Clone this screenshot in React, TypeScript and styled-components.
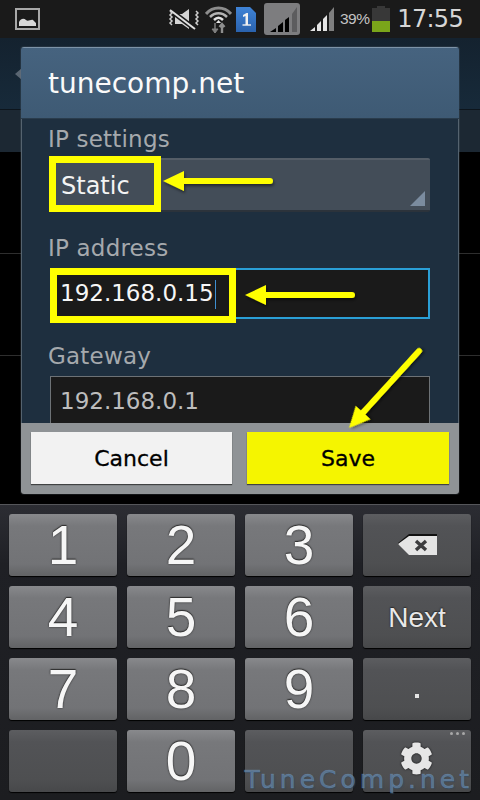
import React, { FC } from 'react'
import styled, { createGlobalStyle } from 'styled-components'
import { FaCog } from 'react-icons/fa'

const GlobalStyle = createGlobalStyle`
  html, body {
    margin: 0;
    padding: 0;
    background: #000;
  }
`

const HAND = `"DejaVu Sans", "Liberation Sans", sans-serif`

const Screen = styled.div`
  position: relative;
  width: 480px;
  height: 800px;
  overflow: hidden;
  display: flex;
  flex-direction: column;
  background: #000;
  font-family: "Liberation Sans", sans-serif;
`

/* status bar */

const StatusBar = styled.div`
  height: 38px;
  flex: none;
  display: flex;
  align-items: center;
  padding: 0 17px 0 15px;
  background: #1a1a1a;
`

const StatusRight = styled.div`
  margin-left: auto;
  display: flex;
  align-items: center;
`

const StatusGap = styled.span<{ $width: number }>`
  width: ${p => p.$width}px;
`

const Percent = styled.span`
  font-size: 15.5px;
  color: #c4c4c4;
  letter-spacing: -0.6px;
  margin: 0 3px 0 6px;
`

const Clock = styled.span`
  font-family: ${HAND};
  font-size: 24px;
  color: #d6d6d6;
  margin-left: 7px;
  letter-spacing: -0.7px;
`

/* page behind the dialog */

const PageHeader = styled.div`
  height: 72px;
  flex: none;
  display: flex;
  align-items: center;
  padding-left: 15px;
  background: linear-gradient(#14222f, #172a3a);
  border-bottom: 1px solid #0d151c;
  box-sizing: border-box;
`

const BackCaret = styled.div`
  width: 0;
  height: 0;
  border-style: solid;
  border-width: 6px 7px 6px 0;
  border-color: transparent #5a6672 transparent transparent;
`

const PageTabs = styled.div`
  height: 42px;
  flex: none;
  background: #1c2833;
`

const PageRow = styled.div<{ $height: number }>`
  height: ${p => p.$height}px;
  flex: none;
  box-sizing: border-box;
  border-bottom: 1px solid #2e2e2e;
`

/* dialog */

const Dialog = styled.div`
  position: absolute;
  left: 21px;
  top: 47px;
  width: 438px;
  height: 447px;
  border-radius: 3px;
  overflow: hidden;
  display: flex;
  flex-direction: column;
  box-shadow: 0 0 0 1px rgba(120, 135, 150, 0.15);
`

const DialogTitle = styled.div`
  height: 72px;
  flex: none;
  box-sizing: border-box;
  padding: 19px 0 0 27px;
  background: linear-gradient(#46637f, #3e5a74);
  border-top: 1px solid #7d93a8;
  border-bottom: 1px solid #2a3c4c;
  font-family: ${HAND};
  font-size: 28px;
  color: #fafafa;
`

const DialogBody = styled.div`
  flex: 1;
  min-height: 0;
  overflow: hidden;
  padding: 7px 28px 0;
  background: #1e2f3f;
  border-left: 1px solid #55636f;
  border-right: 1px solid #55636f;
`

const FieldLabel = styled.div`
  font-family: ${HAND};
  font-size: 23px;
  line-height: 26px;
  letter-spacing: 0.2px;
  color: #a5a9ad;
  margin-left: -2px;
`

const Select = styled.div`
  position: relative;
  height: 54px;
  margin: 6px 0 23px;
  box-sizing: border-box;
  padding: 12px 11px;
  border-radius: 2px;
  background: #434d58;
  border-top: 2px solid #545d67;
  border-bottom: 2px solid #2c333b;
  font-family: ${HAND};
  font-size: 24px;
  color: #f4f4f4;
`

const SelectCorner = styled.div`
  position: absolute;
  right: 5px;
  bottom: 4px;
  width: 0;
  height: 0;
  border-style: solid;
  border-width: 0 0 15px 15px;
  border-color: transparent transparent #7b8c9f transparent;
`

const Input = styled.div<{ $focused?: boolean }>`
  position: relative;
  height: 51px;
  margin: 7px 0 24px;
  box-sizing: border-box;
  padding: ${p => (p.$focused ? '10px 8px' : '11px 9px')};
  background: #1a1a1a;
  border: ${p => (p.$focused ? '2px solid #2a9fd6' : '1px solid #6d7276')};
  font-family: ${HAND};
  font-size: 23px;
  color: ${p => (p.$focused ? '#f6f6f6' : '#bdbdbd')};
`

const Caret = styled.span`
  display: inline-block;
  width: 1px;
  height: 29px;
  margin-left: 1px;
  vertical-align: middle;
  background: #3f8fd0;
`

const Highlight = styled.div<{ $left: number; $top: number; $width: number; $height: number }>`
  position: absolute;
  left: ${p => p.$left}px;
  top: ${p => p.$top}px;
  width: ${p => p.$width}px;
  height: ${p => p.$height}px;
  box-sizing: border-box;
  border: 7px solid #ffff00;
`

const ButtonPanel = styled.div`
  height: 71px;
  flex: none;
  box-sizing: border-box;
  padding: 9px 10px 10px;
  display: flex;
  gap: 15px;
  background: #8f9396;
`

const DialogButton = styled.div<{ $primary?: boolean }>`
  flex: none;
  width: ${p => (p.$primary ? 202 : 201)}px;
  display: flex;
  align-items: center;
  justify-content: center;
  background: ${p => (p.$primary ? '#f5f500' : '#f2f2f2')};
  box-shadow: 0 1px 1px rgba(0, 0, 0, 0.55);
  font-family: ${HAND};
  font-size: 22px;
  color: #000;
  -webkit-text-stroke: 0.3px #000;
`

/* keyboard */

const Keyboard = styled.div`
  position: absolute;
  left: 0;
  top: 504px;
  width: 480px;
  height: 296px;
  box-sizing: border-box;
  padding: 9px 9px 0;
  display: grid;
  grid-template-columns: repeat(4, 108px);
  grid-auto-rows: 62px;
  gap: 10px;
  background: linear-gradient(#2c2d33 0, #1f2025 60px, #1c1d20 100%);
  border-top: 1px solid #55565a;
`

const Key = styled.div<{ $dark?: boolean }>`
  position: relative;
  display: flex;
  align-items: center;
  justify-content: center;
  border-radius: 3px;
  background: ${p =>
    p.$dark
      ? 'linear-gradient(#5c5d60 0, #525356 12px, #4e4f51 50px, #47484a 100%)'
      : 'linear-gradient(#88898c 0, #77787b 12px, #727376 50px, #626365 100%)'};
  box-shadow: 0 1px 1px #000;
  color: #f6f6f6;
  font-size: 55px;
  line-height: 1;
  text-shadow: 0 0 2px #222, 0 -1px 1px #333;
`

const NextLabel = styled.span`
  font-size: 28px;
  margin-top: 2px;
  color: #e8e8e8;
`

const DotLabel = styled.span`
  width: 4px;
  height: 4px;
  margin-top: 14px;
  background: #e4e4e4;
`

const MoreDots = styled.span`
  position: absolute;
  right: 6px;
  top: 2px;
  font-size: 0;
  display: flex;
  gap: 3px;

  i {
    width: 3px;
    height: 3px;
    border-radius: 50%;
    background: #a8a8a8;
  }
`

const Gear = styled(FaCog)`
  color: #e6e6e6;
  font-size: 33px;
  margin: 0 2px 6px 0;
  filter: drop-shadow(0 0 1px #111);
`

const Watermark = styled.div`
  position: absolute;
  right: 7px;
  bottom: 7px;
  font-family: "DejaVu Sans", sans-serif;
  font-size: 25px;
  letter-spacing: 4px;
  line-height: 26px;
  color: rgba(112, 152, 192, 0.55);
  -webkit-text-stroke: 0.5px rgba(112, 152, 192, 0.55);
  text-shadow: 1px 1px 1px rgba(40, 70, 100, 0.5);
`

const Annotations = styled.svg`
  position: absolute;
  left: 0;
  top: 0;
  pointer-events: none;
`

/* small drawings */

const PictureIcon: FC = () => (
  <svg width="25" height="22" viewBox="0 0 25 22">
    <rect x="1" y="1" width="23" height="20" fill="none" stroke="#a8a8a8" strokeWidth="2" />
    <path d="M4 18 V14 C6 10 9 10 11 12 C13 14 16 11 18 12 L21 15 V18 Z" fill="#d8d8d8" />
  </svg>
)

const MuteIcon: FC = () => (
  <svg width="31" height="22" viewBox="0 0 31 22">
    <path d="M7 6 L14 6 L21 1 V21 L14 16 L7 16 Z" fill="#d4d4d4" />
    <path d="M2 2 L27 21" stroke="#1a1a1a" strokeWidth="5" />
    <path d="M2 2 L27 21" stroke="#e0e0e0" strokeWidth="2" />
    <path d="M2 3 l2 2 -2 2 2 2 -2 2 2 2 -2 2 2 2 M28 3 l2 2 -2 2 2 2 -2 2 2 2 -2 2 2 2" fill="none" stroke="#cfcfcf" strokeWidth="1.5" />
  </svg>
)

const WifiIcon: FC = () => (
  <svg width="27" height="27" viewBox="0 0 27 27">
    <path d="M1 8 C8 0 19 0 26 8" fill="none" stroke="#8d8d8d" strokeWidth="3" />
    <path d="M5 11 C10 6 17 6 22 11" fill="none" stroke="#b4b4b4" strokeWidth="2.5" />
    <path d="M9 14 C12 11 15 11 18 14" fill="none" stroke="#e2e2e2" strokeWidth="2.5" />
    <path d="M13.5 14 L11 17 H16 Z" fill="#e8e8e8" />
    <path d="M10 17 V27 L7 23 H13 L10 27 Z" fill="#7e7e7e" stroke="#7e7e7e" />
    <path d="M17 27 V18 M14.5 21 L17 18 L19.5 21" fill="none" stroke="#8e8e8e" strokeWidth="2.4" />
  </svg>
)

const SimIcon: FC = () => (
  <svg width="20" height="25" viewBox="0 0 20 25">
    <defs>
      <linearGradient id="sim" x1="0" x2="0" y1="0" y2="1">
        <stop offset="0" stopColor="#3f83d6" />
        <stop offset="1" stopColor="#2a62ad" />
      </linearGradient>
    </defs>
    <path d="M0 0 H14 L20 6 V25 H0 Z" fill="url(#sim)" />
    <path d="M7 8 L10.5 6 H12 V18 H9.5 V9 L7 10 Z" fill="#f0f0f0" />
    <path d="M6.5 18 H15" stroke="#f0f0f0" strokeWidth="1.4" />
  </svg>
)

const SignalBox: FC = () => (
  <svg width="36" height="32" viewBox="0 0 36 32">
    <rect width="36" height="32" rx="3" fill="#7d7d7f" />
    <path d="M6 29 L12 25 V29 Z" fill="#000" />
    <path d="M14 29 V23 L19 19 V29 Z" fill="#000" />
    <path d="M21 29 V17 L25 14 V29 Z" fill="#000" />
    <path d="M28 29 V11 L33 4 V29 Z" fill="#5c5c5e" />
  </svg>
)

const SignalIcon: FC = () => (
  <svg width="24" height="24" viewBox="0 0 24 24">
    <path d="M0 24 L5 20 V24 Z" fill="#e4e4e4" />
    <path d="M7 24 V18 L11 14 V24 Z" fill="#e4e4e4" />
    <path d="M13 24 V12 L17 8 V24 Z" fill="#e4e4e4" />
    <path d="M19 24 V6 L24 0 V24 Z" fill="#7f7f7f" />
  </svg>
)

const BatteryIcon: FC = () => (
  <svg width="18" height="26" viewBox="0 0 18 26">
    <path d="M5 0 H13 V2 H18 V15 H0 V2 H5 Z" fill="#383838" />
    <rect y="15" width="18" height="11" fill="#7aa51a" />
  </svg>
)

const BackspaceIcon: FC = () => (
  <svg width="41" height="22" viewBox="0 0 41 22">
    <path d="M1 9 L12 0 H40 V3 H12 L1 11 Z" fill="#111" />
    <path d="M1 10 L12 2 H40 V21 H12 Z" fill="#e4e4e4" />
    <path d="M19 7 L29 16 M29 7 L19 16" stroke="#3c3c3e" strokeWidth="3.4" />
  </svg>
)

const Arrow: FC<{ tip: [number, number]; tail: [number, number] }> = ({ tip, tail }) => {
  const angle = (Math.atan2(tail[1] - tip[1], tail[0] - tip[0]) * 180) / Math.PI
  const length = Math.hypot(tail[0] - tip[0], tail[1] - tip[1])

  return (
    <g transform={`translate(${tip[0]} ${tip[1]}) rotate(${angle})`} filter="url(#arrow-shadow)">
      <path d={`M15 0 H${length}`} stroke="#ffff00" strokeWidth="6" strokeLinecap="round" />
      <path d="M0 0 L21 -10 L21 10 Z" fill="#ffff00" />
    </g>
  )
}

const keys = ['1', '2', '3']
const rowTwo = ['4', '5', '6']
const rowThree = ['7', '8', '9']

const App: FC = () => (
  <Screen>
    <GlobalStyle />

    <StatusBar>
      <PictureIcon />
      <StatusRight>
        <MuteIcon />
        <StatusGap $width={6} />
        <WifiIcon />
        <StatusGap $width={4} />
        <SimIcon />
        <StatusGap $width={8} />
        <SignalBox />
        <StatusGap $width={10} />
        <SignalIcon />
        <Percent>39%</Percent>
        <BatteryIcon />
        <Clock>17:55</Clock>
      </StatusRight>
    </StatusBar>

    <PageHeader>
      <BackCaret />
    </PageHeader>
    <PageTabs />
    <PageRow $height={102} />
    <PageRow $height={102} />

    <Keyboard>
      {keys.map(k => <Key key={k}>{k}</Key>)}
      <Key $dark><BackspaceIcon /></Key>
      {rowTwo.map(k => <Key key={k}>{k}</Key>)}
      <Key $dark><NextLabel>Next</NextLabel></Key>
      {rowThree.map(k => <Key key={k}>{k}</Key>)}
      <Key $dark><DotLabel /></Key>
      <Key $dark />
      <Key>0</Key>
      <Key $dark />
      <Key $dark>
        <MoreDots><i /><i /><i /></MoreDots>
        <Gear />
      </Key>
    </Keyboard>

    <Dialog>
      <DialogTitle>tunecomp.net</DialogTitle>
      <DialogBody>
        <FieldLabel>IP settings</FieldLabel>
        <Select>
          Static
          <SelectCorner />
          <Highlight $left={-1} $top={-4} $width={112} $height={56} />
        </Select>
        <FieldLabel>IP address</FieldLabel>
        <Input $focused>
          192.168.0.15<Caret />
          <Highlight $left={-2} $top={-2} $width={186} $height={55} />
        </Input>
        <FieldLabel>Gateway</FieldLabel>
        <Input>192.168.0.1</Input>
      </DialogBody>
      <ButtonPanel>
        <DialogButton>Cancel</DialogButton>
        <DialogButton $primary>Save</DialogButton>
      </ButtonPanel>
    </Dialog>

    <Annotations width="480" height="800" viewBox="0 0 480 800">
      <defs>
        <filter id="arrow-shadow" x="-20%" y="-40%" width="140%" height="180%">
          <feDropShadow dx="1" dy="2" stdDeviation="1.5" floodColor="#000" floodOpacity="0.5" />
        </filter>
      </defs>
      <Arrow tip={[163, 181]} tail={[270, 181]} />
      <Arrow tip={[245, 295]} tail={[352, 295]} />
      <Arrow tip={[349, 428]} tail={[419, 351]} />
    </Annotations>

    <Watermark>TuneComp.net</Watermark>
  </Screen>
)

export default App
